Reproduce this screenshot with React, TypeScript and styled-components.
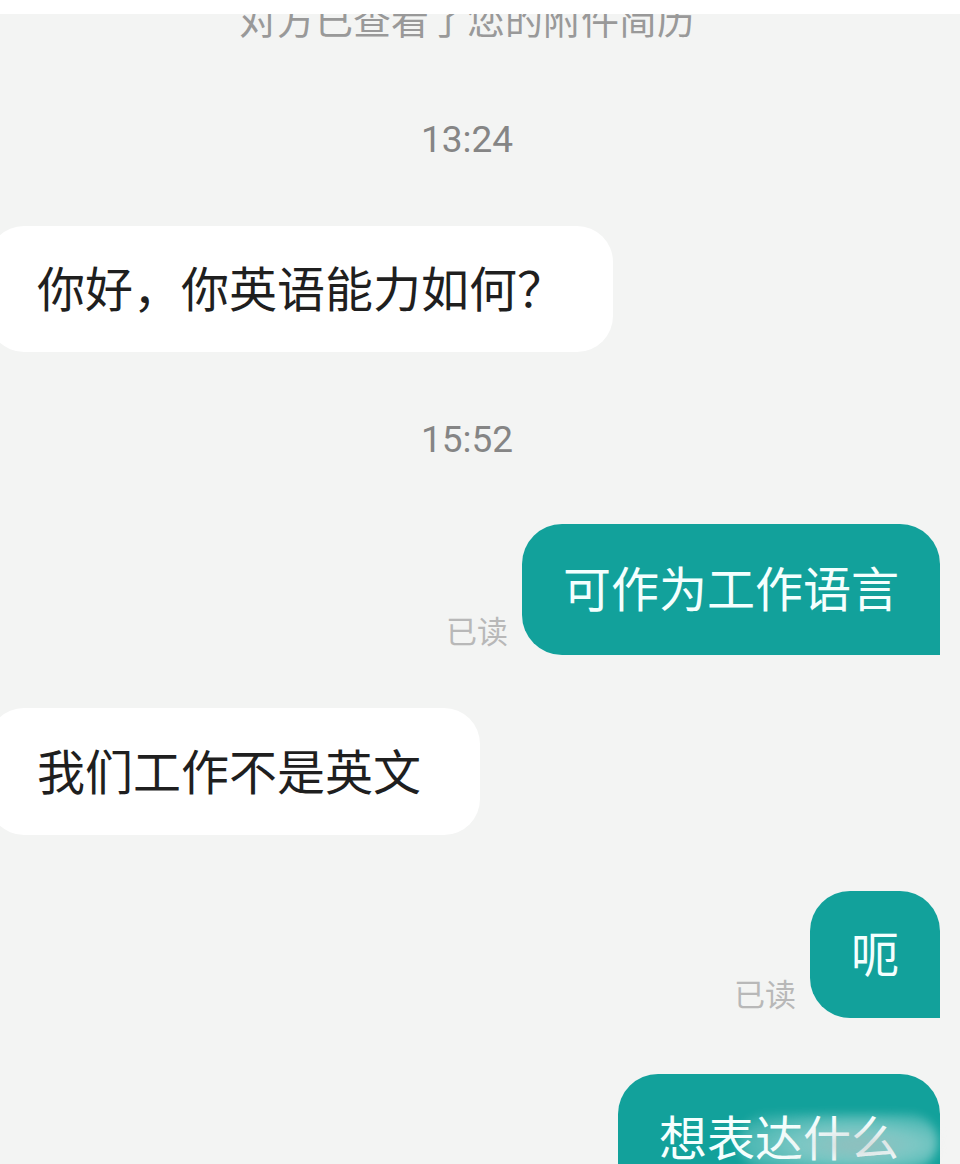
import React, { FC } from 'react';
import styled, { createGlobalStyle } from 'styled-components';

const GlobalStyle = createGlobalStyle`
    html, body {
        margin:0;
        padding:0;
        background-color:#f3f4f3;
    }
    * {
        box-sizing:border-box;
    }
`;

const Screen = styled.div`
    width:960px;
    height:1164px;
    overflow:hidden;
    display:flex;
    flex-direction:column;
    background-color:#f3f4f3;
    font-family:"Noto Sans CJK SC", "Noto Sans", sans-serif;
`;

const TopBar = styled.div`
    height:14px;
    flex-shrink:0;
    background-color:#ffffff;
    position:relative;
    z-index:1;
`;

const Notice = styled.div`
    margin-top:-16px;
    padding-right:26px;
    height:40px;
    line-height:40px;
    font-size:38px;
    color:#999999;
    text-align:center;
    white-space:nowrap;
`;

const Time = styled.div<{ $top: number }>`
    margin-top:${p => p.$top}px;
    padding-right:26px;
    height:36px;
    line-height:36px;
    font-family:Roboto, "Noto Sans", sans-serif;
    font-size:37px;
    color:#858585;
    text-align:center;
`;

const Row = styled.div<{ $top: number; $out?: boolean }>`
    margin-top:${p => p.$top}px;
    display:flex;
    align-items:flex-end;
    justify-content:${p => (p.$out ? 'flex-end' : 'flex-start')};
    gap:14px;
    padding-right:${p => (p.$out ? '20px' : '0px')};
`;

const Bubble = styled.div<{ $out?: boolean; $h: number; $padR?: number }>`
    position:relative;
    height:${p => p.$h}px;
    flex-shrink:0;
    display:flex;
    align-items:center;
    font-size:48px;
    line-height:56px;
    white-space:nowrap;
    color:${p => (p.$out ? '#f4fffe' : '#1f1f1f')};
    background-color:${p => (p.$out ? '#12a19b' : '#ffffff')};
    border-radius:${p => (p.$out ? '40px 40px 0 40px' : '36px')};
    margin-left:${p => (p.$out ? '0' : '-12px')};
    padding:${p => (p.$out ? '0 41px 8px 41px' : `0 ${p.$padR ?? 46}px 6px 49px`)};
`;

const ReadMark = styled.span`
    font-size:31px;
    line-height:36px;
    color:#b8b8b8;
    margin-bottom:7px;
`;

const Watermark = styled.span`
    position:absolute;
    left:120px;
    top:40px;
    width:200px;
    height:56px;
    border-radius:28px;
    background:radial-gradient(ellipse at 60% 55%, rgba(190,200,200,0.75) 0%, rgba(230,238,238,0.5) 35%, rgba(255,255,255,0.25) 65%, rgba(255,255,255,0) 100%);
    filter:blur(5px);
`;

interface IMessage {
    text:string;
    top:number;
    height:number;
    out?:boolean;
    read?:boolean;
    padRight?:number;
    mark?:boolean;
}

const Message: FC<IMessage> = (props) => {
    return(
        <Row $top={props.top} $out={props.out}>
            {props.read && <ReadMark>已读</ReadMark>}
            <Bubble $out={props.out} $h={props.height} $padR={props.padRight}>
                {props.text}
                {props.mark && <Watermark/>}
            </Bubble>
        </Row>
    );
};

const App: FC = () => {
    return(
        <>
            <GlobalStyle/>
            <Screen>
                <TopBar/>
                <Notice>对方已查看了您的附件简历</Notice>
                <Time $top={84}>13:24</Time>
                <Message text="你好，你英语能力如何？" top={68} height={126} padRight={48}/>
                <Time $top={70}>15:52</Time>
                <Message text="可作为工作语言" top={66} height={131} out read/>
                <Message text="我们工作不是英文" top={53} height={127} padRight={59}/>
                <Message text="呃" top={56} height={127} out read/>
                <Message text="想表达什么" top={56} height={130} out mark/>
            </Screen>
        </>
    );
};

export default App;
